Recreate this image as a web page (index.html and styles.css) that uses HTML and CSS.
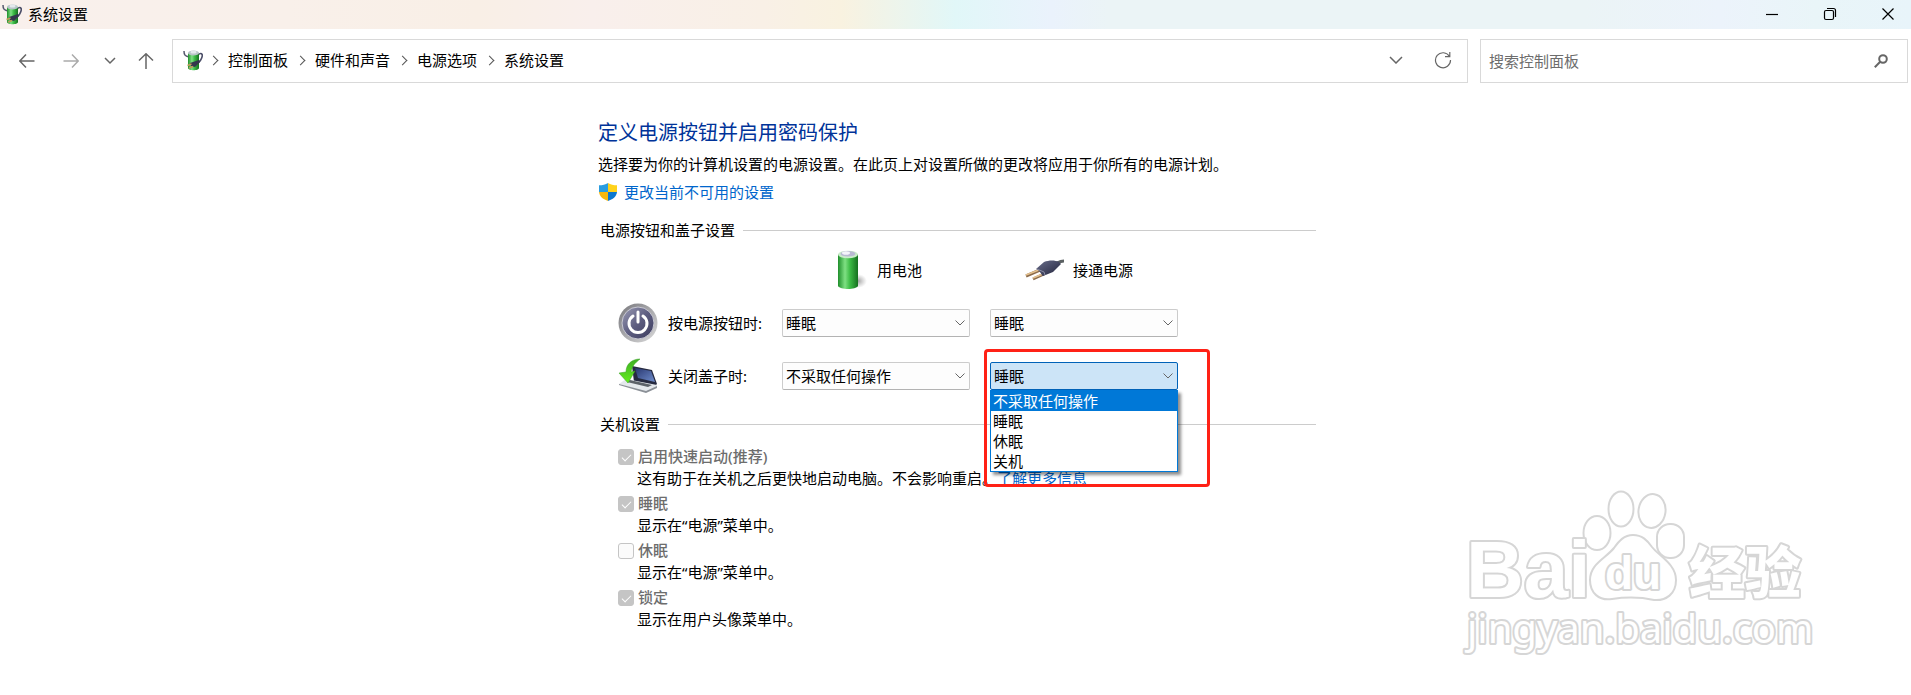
FILE: index.html
```html
<!DOCTYPE html>
<html lang="zh-CN">
<head>
<meta charset="utf-8">
<title>系统设置</title>
<link rel="stylesheet" href="styles.css">
</head>
<body>
<svg class="defs" aria-hidden="true">
  <defs>
    <linearGradient id="green" x1="0" x2="1"><stop offset="0" stop-color="#1f8f2b"/><stop offset=".35" stop-color="#7fe083"/><stop offset=".6" stop-color="#3cbb45"/><stop offset="1" stop-color="#15701f"/></linearGradient>
    <linearGradient id="dark" x1="0" y1="0" x2="1" y2="1"><stop offset="0" stop-color="#6b6f8c"/><stop offset="1" stop-color="#20223a"/></linearGradient>
    <linearGradient id="ring" x1="0" y1="0" x2="1" y2="1"><stop offset="0" stop-color="#77777b"/><stop offset=".5" stop-color="#a9a9ac"/><stop offset="1" stop-color="#dcdcdc"/></linearGradient>
    <linearGradient id="disc" x1="0" y1="0" x2="1" y2="1"><stop offset="0" stop-color="#9c9db6"/><stop offset=".5" stop-color="#5d5d80"/><stop offset="1" stop-color="#3b3b5c"/></linearGradient>
    <linearGradient id="screen" x1="0" y1="0" x2="1" y2="1"><stop offset="0" stop-color="#28366f"/><stop offset="1" stop-color="#6f8dcc"/></linearGradient>
    <linearGradient id="arrow" x1="0" y1="0" x2="0" y2="1"><stop offset="0" stop-color="#3fae25"/><stop offset="1" stop-color="#63ee1c"/></linearGradient>
    <radialGradient id="shade"><stop offset="0" stop-color="#777" stop-opacity=".7"/><stop offset="1" stop-color="#999" stop-opacity="0"/></radialGradient>
    <symbol id="power-options" viewBox="0 0 20 22">
      <path d="M1 2c0 4 1 5 5 6" fill="none" stroke="#55586e" stroke-width="1.5"/>
      <path d="M15 6c3-3 5-1 4 2s-1 4-4 6" fill="none" stroke="#4b4e68" stroke-width="1.6"/>
      <path d="M5 4v15c0 3 11 3 11 0V4z" fill="url(#green)"/>
      <ellipse cx="10.500" cy="4" rx="5.500" ry="2.600" fill="#b9c4c8"/>
      <ellipse cx="10.500" cy="3" rx="3" ry="1.600" fill="#e4e9ec"/>
      <path d="M7 14l9-3 1 2-5 5-4-1z" fill="#34374d"/>
      <path d="M8.500 15l-4 1.500M10 17.500l-4 1.500" stroke="#c29a5a" stroke-width="1.500"/>
    </symbol>
  </defs>
</svg>

<header class="titlebar">
  <svg class="app-icon" aria-hidden="true"><use href="#power-options"/></svg>
  <span class="window-title">系统设置</span>
  <div class="window-controls">
    <button aria-label="最小化"><svg width="14" height="14" viewBox="0 0 14 14"><path d="M1 7.500h12"/></svg></button>
    <button aria-label="还原"><svg width="14" height="14" viewBox="0 0 14 14"><rect x="1.500" y="3.500" width="9" height="9" rx="1.500"/><path d="M4 1.500h6.500a2 2 0 0 1 2 2V10"/></svg></button>
    <button aria-label="关闭"><svg width="14" height="14" viewBox="0 0 14 14"><path d="M1.500 1.500l11 11M12.500 1.500l-11 11"/></svg></button>
  </div>
</header>

<nav class="toolbar">
  <div class="history">
    <button aria-label="后退"><svg width="16" height="16" viewBox="0 0 16 16"><path d="M15.500 8H1M7 1.500L.8 8 7 14.500"/></svg></button>
    <button class="is-off" aria-label="前进"><svg width="16" height="16" viewBox="0 0 16 16"><path d="M.5 8H15M9 1.500L15.200 8 9 14.500"/></svg></button>
    <button class="narrow" aria-label="最近浏览的位置"><svg width="12" height="8" viewBox="0 0 12 8"><path d="M1 1l5 5 5-5"/></svg></button>
    <button class="up" aria-label="上移"><svg width="16" height="16" viewBox="0 0 16 16"><path d="M8 16V1M1 7.500L8 .8l7 6.700"/></svg></button>
  </div>
  <div class="address">
    <svg class="app-icon" aria-hidden="true"><use href="#power-options"/></svg>
    <ol class="crumbs">
      <li><a href="#">控制面板</a></li>
      <li><a href="#">硬件和声音</a></li>
      <li><a href="#">电源选项</a></li>
      <li><a href="#">系统设置</a></li>
    </ol>
    <button class="drop" aria-label="以前的位置"><svg width="14" height="8" viewBox="0 0 14 8"><path d="M1 1l6 6 6-6"/></svg></button>
    <button class="refresh" aria-label="刷新"><svg width="18" height="18" viewBox="0 0 18 18"><path d="M15.500 5.500A7.500 7.500 0 1 0 16.500 9M15.800 1v4.700H11"/></svg></button>
  </div>
  <div class="search">
    <input type="text" placeholder="搜索控制面板" aria-label="搜索控制面板">
    <button aria-label="搜索"><svg width="14" height="14" viewBox="0 0 14 14"><circle cx="9" cy="5" r="3.800"/><path d="M6.200 7.800L.8 13.200"/></svg></button>
  </div>
</nav>

<main class="page">
  <div class="content">
    <h1>定义电源按钮并启用密码保护</h1>
    <p class="intro">选择要为你的计算机设置的电源设置。在此页上对设置所做的更改将应用于你所有的电源计划。</p>
    <p class="elevate">
      <svg width="18" height="18" viewBox="0 0 18 18" aria-hidden="true">
        <path d="M9 0C6.500 1.600 3.500 2.300 0 2.300V9h9z" fill="#2a9de0"/><path d="M9 0c2.500 1.600 5.500 2.300 9 2.300V9H9z" fill="#ffd21a"/>
        <path d="M0 9c.3 4.500 4.500 7.500 9 9V9z" fill="#f9b80c"/><path d="M18 9c-.3 4.500-4.500 7.500-9 9V9z" fill="#0c78cf"/>
      </svg>
      <a href="#">更改当前不可用的设置</a>
    </p>

    <h2>电源按钮和盖子设置</h2>
    <div class="grid">
      <div class="source battery">
        <svg width="30" height="40" viewBox="0 0 30 40" aria-hidden="true">
          <ellipse cx="21" cy="31" rx="9" ry="7" fill="url(#shade)"/>
          <path d="M1 4v32c2 4 18 4 20 0V4z" fill="url(#green)"/>
          <ellipse cx="11" cy="4.500" rx="10" ry="3.800" fill="#c9ecc9"/>
          <ellipse cx="11" cy="3.800" rx="7.500" ry="2.800" fill="#b9b9d2"/><ellipse cx="9" cy="3" rx="4" ry="1.800" fill="#f4f4fa"/>
        </svg>
        <span>用电池</span>
      </div>
      <div class="source plug">
        <svg width="40" height="22" viewBox="0 0 40 22" aria-hidden="true">
          <path d="M15 11L1 17M19 15L8 20" stroke="#8b6b4b" stroke-width="3"/><path d="M15 10.500L1 16M19 14.500L8 19" stroke="#e5c290" stroke-width="1.500"/>
          <path d="M30 5c3-1 4-3 9-3" fill="none" stroke="#5b6162" stroke-width="3"/>
          <path d="M11 10l8-7c5-2 11-2 15 0l2 2-8 8-10 4c-2-1-2-5-7-7z" fill="url(#dark)"/><path d="M12 10l7 3 1 3" fill="none" stroke="#888ba5"/>
        </svg>
        <span>接通电源</span>
      </div>

      <svg class="row-icon" width="40" height="40" viewBox="0 0 40 40" aria-hidden="true">
        <circle cx="20" cy="20" r="19.500" fill="url(#ring)"/><circle cx="20" cy="20" r="16" fill="url(#disc)" stroke="#c8c8d2"/>
        <path d="M15 13a9 9 0 1 0 10 0M20 9v10" fill="none" stroke="#fff" stroke-width="3" stroke-linecap="round"/>
      </svg>
      <span class="row-label">按电源按钮时:</span>
      <div class="combo"><select aria-label="按电源按钮时 用电池"><option>睡眠</option></select><svg width="10" height="6" viewBox="0 0 10 6"><path d="M.5.5L5 5 9.500.5"/></svg></div>
      <div class="combo"><select aria-label="按电源按钮时 接通电源"><option>睡眠</option></select><svg width="10" height="6" viewBox="0 0 10 6"><path d="M.5.5L5 5 9.500.5"/></svg></div>

      <svg class="row-icon" width="40" height="36" viewBox="0 0 40 36" aria-hidden="true">
        <path d="M14 8l20 4 5 14-3 3-20-5z" fill="#262a40"/><path d="M17 10l16 3 4 11-17-4z" fill="url(#screen)"/>
        <path d="M8 21l31 6v2l-11 5L1 26z" fill="#e4e8ec"/><path d="M1 26l27 7 11-5v2l-11 5L1 27z" fill="#8b9097"/>
        <path d="M12 22l22 5-4 2-21-5z" fill="#5c6269"/>
        <path d="M22 1C14 1 8 6 8 14L1 15l9 10 7-12-4 1c1-6 4-9 9-13z" fill="url(#arrow)" stroke="#37a320" stroke-width=".5"/>
      </svg>
      <span class="row-label">关闭盖子时:</span>
      <div class="combo"><select aria-label="关闭盖子时 用电池"><option>不采取任何操作</option></select><svg width="10" height="6" viewBox="0 0 10 6"><path d="M.5.5L5 5 9.500.5"/></svg></div>
      <div class="combo is-open">
        <select aria-label="关闭盖子时 接通电源"><option>睡眠</option></select><svg width="10" height="6" viewBox="0 0 10 6"><path d="M.5.5L5 5 9.500.5"/></svg>
        <ul class="options" role="listbox">
          <li role="option" aria-selected="true">不采取任何操作</li>
          <li role="option">睡眠</li>
          <li role="option">休眠</li>
          <li role="option">关机</li>
        </ul>
        <div class="highlight"></div>
      </div>
    </div>

    <h2>关机设置</h2>
    <div class="toggles">
      <div class="toggle"><input type="checkbox" id="fast" checked disabled><label for="fast">启用快速启动(推荐)</label><p>这有助于在关机之后更快地启动电脑。不会影响重启。<a href="#">了解更多信息</a></p></div>
      <div class="toggle"><input type="checkbox" id="sleep" checked disabled><label for="sleep">睡眠</label><p>显示在“电源”菜单中。</p></div>
      <div class="toggle"><input type="checkbox" id="hibernate" disabled><label for="hibernate">休眠</label><p>显示在“电源”菜单中。</p></div>
      <div class="toggle"><input type="checkbox" id="lock" checked disabled><label for="lock">锁定</label><p>显示在用户头像菜单中。</p></div>
    </div>
  </div>
</main>

<svg class="watermark" width="360" height="180" viewBox="0 0 360 180">
  <g class="wm-shape">
    <ellipse cx="133" cy="43" rx="13.500" ry="17"/>
    <ellipse cx="157" cy="19" rx="12.500" ry="17.500"/>
    <ellipse cx="188" cy="21" rx="13.500" ry="17" transform="rotate(8 188 21)"/>
    <rect x="193" y="34" width="27" height="34" rx="13"/>
    <path d="M169 45c9 0 14 5 19 12 7 9 24 17 24 33 0 14-10 21-22 20-14-3-28-3-42-1-13 2-22-6-22-19 0-16 15-21 24-32 5-7 10-13 19-13z"/>
  </g>
  <text class="wm-text wm-bai" x="2" y="107">Bai</text>
  <text class="wm-text wm-du" x="141" y="99">du</text>
  <text class="wm-text wm-cn" x="225" y="103">经验</text>
  <text class="wm-text wm-url" x="3" y="153">jingyan.baidu.com</text>
</svg>
</body>
</html>
```

FILE: styles.css
```css
* { box-sizing: border-box; }

body {
  margin: 0;
  min-height: 100vh;
  position: relative;
  background: #fff;
  color: #000;
  font: 15px/20px "Noto Sans", "Noto Sans CJK SC", sans-serif;
}

h1, h2, p, ul, ol { margin: 0; padding: 0; font-weight: 400; }
ul, ol { list-style: none; }
a { color: #0066cc; text-decoration: none; }
button { padding: 0; border: 0; background: none; display: flex; align-items: center; justify-content: center; }
button svg, .combo svg { fill: none; stroke: #666; stroke-width: 1.5; }
input, select { font: inherit; color: inherit; }
.defs { position: absolute; width: 0; height: 0; }
.app-icon { width: 20px; height: 22px; flex: none; }

.titlebar {
  display: flex;
  align-items: center;
  height: 29px;
  padding: 0 0 2px 2px;
  background: linear-gradient(90deg, #f9f0ec 0%, #f9f0ea 15%, #f9efe6 25%, #f9efec 31%, #f9f0e6 40%, #f9f2e0 44%, #e1f7f8 50%, #eaf2fc 55%, #ebf4f6 58%, #ebf4f6 83%, #ecf3fb 90%, #e9f5f8 95%, #e8f4fa 100%);
}
.window-title { margin-left: 6px; }
.window-controls { display: flex; gap: 12px; margin-left: auto; }
.window-controls button { width: 46px; height: 27px; }
.window-controls svg { stroke: #000; stroke-width: 1.2; }

.toolbar { display: flex; padding: 10px 3px 0 12px; }
.history { display: flex; align-items: center; width: 160px; }
.history button { width: 30px; height: 44px; margin-right: 14px; }
.history .narrow { width: 20px; }
.history .up { width: 24px; margin: 0; }
.history .is-off svg { stroke: #aaa; }
.address, .search { display: flex; align-items: center; height: 44px; border: 1px solid #d9d9d9; }
.address { flex: 1; padding: 0 15px 2px 10px; }
.crumbs { display: flex; margin-left: 7px; }
.crumbs li { display: flex; align-items: center; }
.crumbs li::before {
  content: "";
  width: 6px;
  height: 6px;
  margin-right: 11px;
  border: solid #555;
  border-width: 1px 1px 0 0;
  transform: rotate(45deg);
}
.crumbs li + li::before { margin-left: 9px; }
.crumbs a { color: #000; }
.drop { margin-left: auto; margin-right: 31px; }
.refresh svg { stroke-width: 1.2; }
.search { width: 428px; margin-left: 12px; padding: 0 19px 0 8px; }
.search input { flex: 1; min-width: 0; padding: 0; border: 0; outline: 0; background: none; }
.search input::placeholder { color: #6d6d6d; opacity: 1; }
.search svg { stroke-width: 2; }

.page { padding: 36px 0 40px 3px; }
.content { max-width: 718px; margin: 0 auto; }
h1 { font-size: 20px; line-height: 28px; color: #003399; }
.intro { margin-top: 7px; }
.elevate { display: flex; align-items: center; gap: 7px; margin-top: 8px; padding-left: 1px; }
h2 { display: flex; align-items: center; gap: 8px; margin: 18px 0 0 2px; font-size: 15px; line-height: 20px; }
h2::after { content: ""; flex: 1; height: 1px; background: #ccc; }
.grid + h2 { margin-top: 12px; }

.grid {
  display: grid;
  grid-template-columns: 50px 114px 208px 188px;
  grid-auto-rows: 53px;
  align-items: center;
  margin: 3px 0 0 20px;
}
.source { display: flex; align-items: center; }
.battery { grid-column: 3; padding-left: 55px; gap: 10px; }
.plug { grid-column: 4; padding-left: 35px; gap: 8px; }
.combo { position: relative; width: 188px; }
.combo select {
  display: block;
  width: 100%;
  height: 28px;
  padding: 0 3px;
  appearance: none;
  border: 1px solid #ccc;
  border-bottom-color: #b3b3b3;
  border-radius: 2px;
  background: #fdfdfd;
}
.combo > svg { position: absolute; right: 5px; top: 11px; stroke-width: 1; pointer-events: none; }
.is-open { z-index: 2; }
.combo.is-open select { border-color: #0062b8; background: #cce4f7; }
.options {
  position: absolute;
  top: 28px;
  left: 0;
  width: 100%;
  border: 1px solid #0078d7;
  background: #fff;
  box-shadow: 3px 3px 3px rgba(0, 0, 0, .45);
}
.options li { height: 20px; padding-left: 2px; }
.options [aria-selected="true"] { background: #0078d7; color: #fff; }
.highlight {
  position: absolute;
  top: -13px;
  left: -6px;
  width: 226px;
  height: 138px;
  border: 3px solid #ff2116;
  border-radius: 4px;
  pointer-events: none;
}

.toggles { display: grid; gap: 4px; margin: 12px 0 0 20px; }
.toggle { display: grid; grid-template-columns: 16px 1fr; column-gap: 3px; row-gap: 1px; align-items: center; }
.toggle label { padding-left: 1px; color: #6d6d6d; font-weight: 500; line-height: 20px; }
.toggle p { grid-column: 2; line-height: 22px; }
.toggle input {
  display: grid;
  place-items: center;
  width: 16px;
  height: 16px;
  margin: 2px 0 0;
  appearance: none;
  border: 1px solid #c5c5c5;
  border-radius: 3px;
  background: #fbfbfb;
}
.toggle input:checked { background: #c5c5c5; }
.toggle input:checked::before {
  content: "";
  width: 8px;
  height: 4px;
  margin-bottom: 2px;
  border: solid #fff;
  border-width: 0 0 1px 1px;
  transform: rotate(-45deg);
}

.watermark { position: absolute; right: 87px; bottom: 25px; overflow: visible; pointer-events: none; }
.wm-shape, .wm-text { fill: #fff; stroke: #d6d6d6; stroke-width: 2; stroke-linejoin: round; }
.wm-text { paint-order: stroke; stroke-width: 4; }
.wm-bai { font: 700 80px "Liberation Sans", sans-serif; }
.wm-du { font: 700 46px "Liberation Sans", sans-serif; }
.wm-cn { font: 900 56px "Noto Sans CJK SC", sans-serif; }
.wm-url { font: 400 40px "Noto Sans", sans-serif; }
```
